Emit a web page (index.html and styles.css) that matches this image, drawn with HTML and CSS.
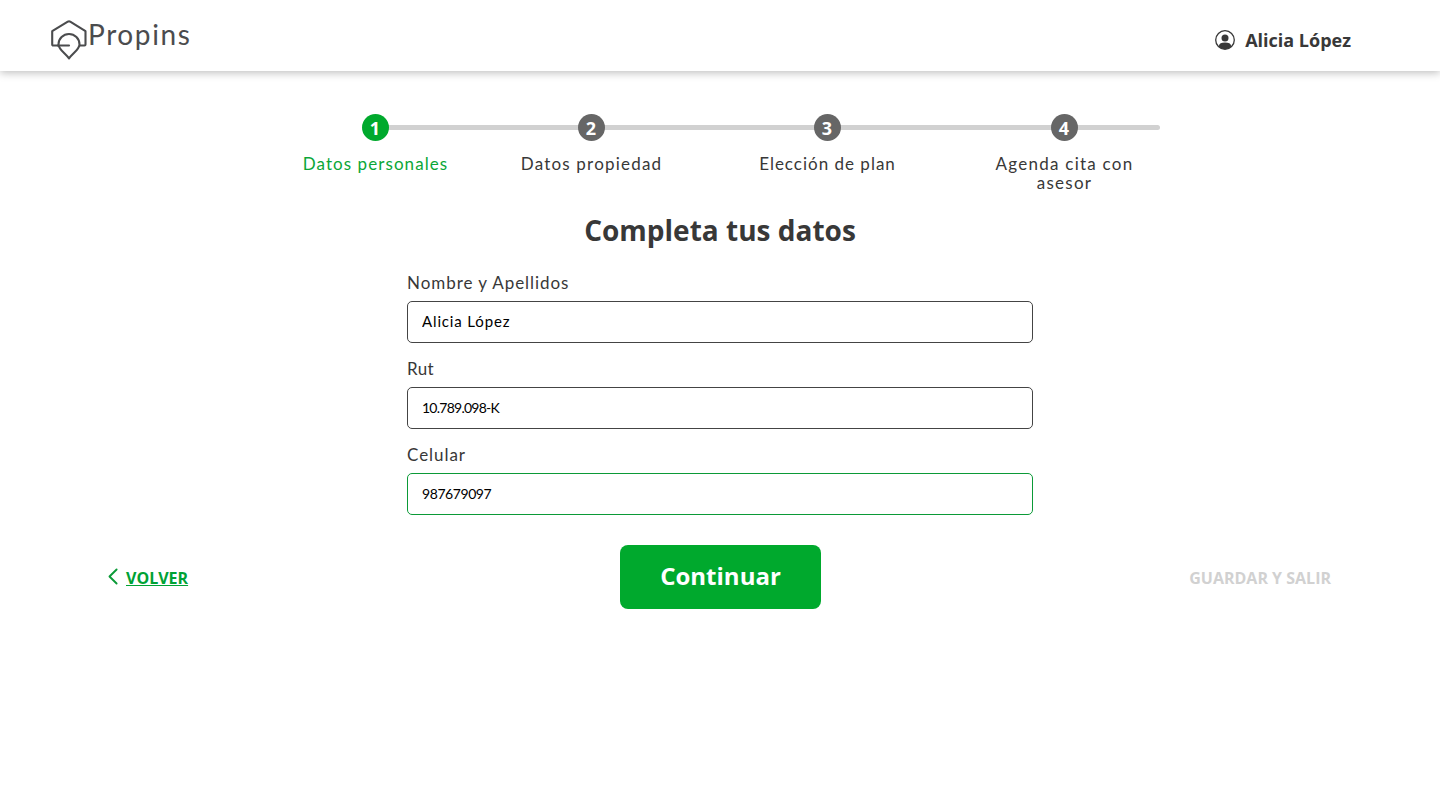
FILE: index.html
```html
<!DOCTYPE html>
<html lang="es">
<head>
<meta charset="utf-8">
<title>Propins - Completa tus datos</title>
<link rel="stylesheet" href="styles.css">
</head>
<body>
<header class="header">
  <a class="brand">
    <svg class="brand-mark" width="38" height="42" viewBox="0 0 38 42" fill="none" stroke="#4b4c4e" stroke-width="2.1" stroke-linecap="round" stroke-linejoin="round">
      <path d="M8 26.500H3.200Q2.200 26.500 2.200 25.500V12.200L17.800 2.700Q19 2 20.200 2.700L35.500 12.200V25.500Q35.500 26.500 34.500 26.500H30"/>
      <path d="M8 26.500H19"/>
      <path d="M19 39.500C16 35 8.500 30.500 8.500 25.500A10.300 10.300 0 0 1 29.500 25.500C29.500 30.500 22 35 19 39.500Z"/>
    </svg>
    <span class="brand-name">Propins</span>
  </a>
  <div class="user">
    <svg width="20" height="20" viewBox="0 0 20 20">
      <circle cx="10" cy="10" r="9.3" fill="none" stroke="#383838" stroke-width="1.3"/>
      <circle cx="10" cy="7.9" r="3.5" fill="#383838"/>
      <path d="M3.700 16.400C4.200 13.600 6.200 12.600 10 12.600S15.800 13.600 16.300 16.400C14.800 18 12.600 19 10 19S5.200 18 3.700 16.400Z" fill="#383838"/>
    </svg>
    <span class="user-name">Alicia López</span>
  </div>
</header>
<main>
  <ol class="steps">
    <li class="step step-active"><span class="dot">1</span><span class="step-label label-1">Datos personales</span></li>
    <li class="step"><span class="dot">2</span><span class="step-label label-2">Datos propiedad</span></li>
    <li class="step"><span class="dot">3</span><span class="step-label label-3">Elección de plan</span></li>
    <li class="step step-last"><span class="dot">4</span><span class="step-label label-4">Agenda cita con<br>asesor</span></li>
  </ol>
  <h1 class="title">Completa tus datos</h1>
  <form class="form">
    <label class="field"><span class="field-label">Nombre y Apellidos</span><input class="input input-name" value="Alicia López"></label>
    <label class="field"><span class="field-label label-rut">Rut</span><input class="input input-rut" value="10.789.098-K"></label>
    <label class="field"><span class="field-label">Celular</span><input class="input input-phone input-active" value="987679097"></label>
  </form>
  <div class="actions">
    <a class="back">
      <svg width="10" height="17" viewBox="0 0 10 17" fill="none" stroke="#0b9a37" stroke-width="1.9" stroke-linecap="round" stroke-linejoin="round"><path d="M8.600 1.500L1.500 8.500L8.600 15.500"/></svg>
      <span class="back-text">VOLVER</span>
    </a>
    <button class="next" type="button">Continuar</button>
    <span class="save">GUARDAR Y SALIR</span>
  </div>
</main>
</body>
</html>
```
FILE: styles.css
```css
* { box-sizing: border-box; }
body { margin: 0; background: #fff; color: #383838; font-family: Lato, "Open Sans", sans-serif; }
.header {
  height: 71px; padding: 0 89px 0 50px;
  display: flex; justify-content: space-between; align-items: flex-start;
  box-shadow: 0 2px 8px rgba(0, 0, 0, .25);
}
.brand { display: flex; padding-top: 19px; color: #4b4c4e; }
.brand-name { margin-top: -1px; font-size: 28px; line-height: 32px; letter-spacing: 1.6px; }
.user { display: flex; align-items: center; gap: 10px; padding-top: 28px; }
.user-name { font: 700 18px/24px "Open Sans", sans-serif; }
.steps {
  list-style: none; margin: 43px 0 0 267px; padding: 0;
  display: grid; grid-template-columns: 216px 216px 256px 218px;
}
.step { position: relative; display: flex; flex-direction: column; align-items: center; gap: 13px; }
.step::before {
  content: ""; position: absolute; top: 11px; left: 0; right: 0;
  height: 5px; background: #d1d1d1;
}
.step-active::before { left: 50%; }
.step-last::before { right: 13px; border-radius: 0 3px 3px 0; }
.dot {
  position: relative; width: 27px; height: 27px; border-radius: 50%;
  background: #666; color: #fff; text-align: center;
  font: 700 18px/29px "Open Sans", sans-serif;
}
.step-active .dot { background: #00a92d; }
.step-label { padding-left: 1px; font-size: 17px; line-height: 19px; text-align: center; white-space: nowrap; }
.step-active .step-label { color: #0ba637; }
.label-1 { letter-spacing: 1.07px; }
.label-2 { letter-spacing: 1.2px; }
.label-3 { letter-spacing: 1px; }
.label-4 { letter-spacing: 1.24px; }
.title { margin: 18px 0 0; text-align: center; font: 700 28px/40px "Open Sans", sans-serif; }
.form { width: 626px; margin: 23px auto 0; display: grid; gap: 16px; }
.field { display: grid; gap: 9px; }
.field-label { font-size: 17px; line-height: 19px; letter-spacing: .95px; }
.label-rut { letter-spacing: .4px; }
.input {
  display: block; width: 100%; height: 42px; padding: 0 14px 2px;
  border: 1px solid #444; border-radius: 5px; outline: 0; background: #fff;
  color: #000; font: 14px Lato, sans-serif;
}
.input-name { font-size: 15px; letter-spacing: .86px; }
.input-rut { letter-spacing: -.75px; }
.input-phone { letter-spacing: -.43px; }
.input-active { border-color: #0b9a37; }
.actions {
  margin-top: 30px; padding: 0 109px 0 108px;
  display: grid; grid-template-columns: 512px 201px 1fr; align-items: start;
}
.back { display: flex; gap: 8px; padding-top: 23px; color: #00a235; }
.back-text { margin-top: -1px; font: 700 16px/22px "Open Sans", sans-serif; text-decoration: underline; text-decoration-thickness: 1px; }
.next {
  height: 64px; border: 0; border-radius: 8px; background: #00a92d; color: #fff;
  font: 700 24px/32px "Open Sans", sans-serif; padding: 0 0 2px;
}
.save { justify-self: end; padding-top: 22px; color: #d1d1d1; font: 700 16px/22px "Open Sans", sans-serif; }
```
